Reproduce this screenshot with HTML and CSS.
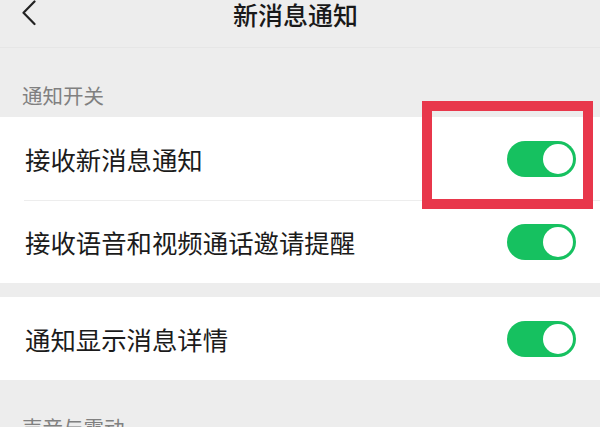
FILE: index.html
```html
<!DOCTYPE html>
<html lang="zh-CN">
<head>
<meta charset="utf-8">
<title>新消息通知</title>
<link rel="stylesheet" href="styles.css">
</head>
<body>
<div class="screen">
  <header class="topbar">
    <div class="back">
      <svg width="14" height="26" viewBox="0 0 14 26"><path d="M12.5 1.5 L1.5 12.8 L12.5 24" fill="none" stroke="#222" stroke-width="2.2" stroke-linecap="round" stroke-linejoin="round"/></svg>
    </div>
    <h1 class="title">新消息通知</h1>
    <div class="spacer"></div>
  </header>

  <div class="group-label">通知开关</div>
  <section class="group">
    <div class="cell">
      <div class="cell-body">
        <span class="cell-text">接收新消息通知</span>
        <span class="toggle"><span class="knob"></span></span>
      </div>
    </div>
    <div class="cell">
      <div class="cell-body divided">
        <span class="cell-text">接收语音和视频通话邀请提醒</span>
        <span class="toggle"><span class="knob"></span></span>
      </div>
    </div>
  </section>

  <div class="gap"></div>

  <section class="group">
    <div class="cell">
      <div class="cell-body">
        <span class="cell-text">通知显示消息详情</span>
        <span class="toggle"><span class="knob"></span></span>
      </div>
    </div>
  </section>

  <div class="group-label">声音与震动</div>

  <div class="highlight"></div>
</div>
</body>
</html>
```
FILE: styles.css
```css
* { box-sizing: border-box; }
html, body { margin: 0; padding: 0; }
body {
  background: #ededed;
  font-family: "Noto Sans CJK SC", "Noto Sans", sans-serif;
  color: #1a1a1a;
}
.screen {
  position: relative;
  width: 600px;
  height: 427px;
  overflow: hidden;
  background: #ededed;
}
.topbar {
  height: 48px;
  display: grid;
  grid-template-columns: 1fr auto 1fr;
  align-items: start;
  border-bottom: 1px solid #e6e6e6;
}
.back {
  padding-left: 22px;
  height: 26px;
  display: flex;
}
.title {
  margin: 0;
  padding-right: 9px;
  font-size: 25px;
  font-weight: 500;
  line-height: 29px;
  color: #191919;
}
.group-label {
  padding: 36px 0 0 22px;
  height: 69px;
  font-size: 20.5px;
  line-height: 22px;
  color: #808080;
}
.group {
  background: #fff;
}
.cell {
  padding-left: 24px;
}
.cell-body {
  height: 83px;
  display: flex;
  align-items: center;
  justify-content: space-between;
  padding-right: 24px;
}
.cell-body.divided {
  border-top: 1px solid #ededed;
}
.cell-text {
  font-size: 25.4px;
  line-height: 30px;
  padding-left: 1px;
  color: #1b1b1b;
}
.toggle {
  width: 69px;
  height: 36px;
  border-radius: 18px;
  background: #16c160;
  display: flex;
  justify-content: flex-end;
  align-items: center;
  padding: 3px;
}
.knob {
  width: 30px;
  height: 30px;
  border-radius: 50%;
  background: #fff;
}
.gap {
  height: 14px;
}
.highlight {
  position: absolute;
  left: 422px;
  top: 101px;
  width: 171px;
  height: 108px;
  border: 10px solid #e8374b;
}
```
